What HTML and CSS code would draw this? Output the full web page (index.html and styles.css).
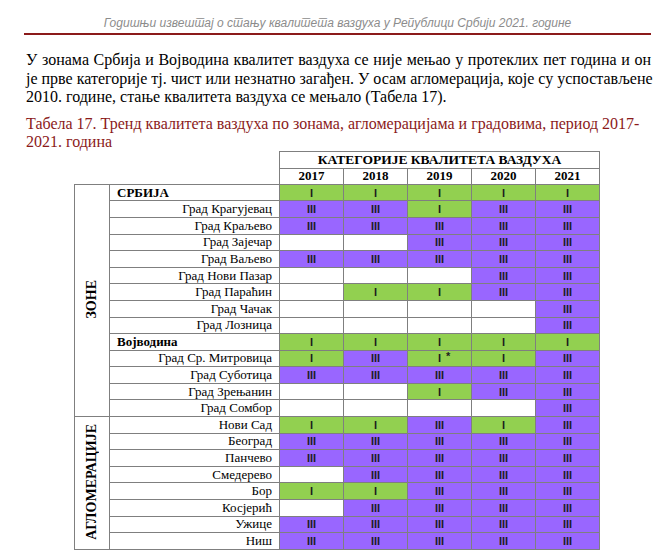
FILE: index.html
```html
<!DOCTYPE html>
<html lang="sr">
<head>
<meta charset="utf-8">
<title>Тренд квалитета ваздуха</title>
<link rel="stylesheet" href="styles.css">
</head>
<body>
<div class="page">
  <div class="running-head">Годишњи извештај о стању квалитета ваздуха у Републици Србији 2021. године</div>
  <p class="para">
    <span class="jline">У зонама Србија и Војводина квалитет ваздуха се није мењао у протеклих пет година и он</span>
    <span class="jline">је прве категорије тј. чист или незнатно загађен. У осам агломерација, које су успостављене</span>
    <span class="line">2010. године, стање квалитета ваздуха се мењало (Табела 17).</span>
  </p>
  <p class="caption">Табела 17. Тренд квалитета ваздуха по зонама, агломерацијама и градовима, период 2017-<br>2021. година</p>

  <table class="trend">
    <colgroup>
      <col class="c-zone"><col class="c-name"><col class="c-year"><col class="c-year"><col class="c-year"><col class="c-year"><col class="c-year">
    </colgroup>
    <thead>
      <tr class="h1"><th class="blank" colspan="2"></th><th class="cat" colspan="5">КАТЕГОРИЈЕ КВАЛИТЕТА ВАЗДУХА</th></tr>
      <tr class="h2"><th class="blank" colspan="2"></th><th class="yr">2017</th><th class="yr">2018</th><th class="yr">2019</th><th class="yr">2020</th><th class="yr">2021</th></tr>
    </thead>
    <tbody>
      <tr><td class="group" rowspan="14"><span class="vlabel">ЗОНЕ</span></td><td class="zname">СРБИЈА</td><td class="g">I</td><td class="g">I</td><td class="g">I</td><td class="g">I</td><td class="g">I</td></tr>
      <tr><td class="name">Град Крагујевац</td><td class="p">III</td><td class="p">III</td><td class="g">I</td><td class="p">III</td><td class="p">III</td></tr>
      <tr><td class="name">Град Краљево</td><td class="p">III</td><td class="p">III</td><td class="p">III</td><td class="p">III</td><td class="p">III</td></tr>
      <tr><td class="name">Град Зајечар</td><td></td><td></td><td class="p">III</td><td class="p">III</td><td class="p">III</td></tr>
      <tr><td class="name">Град Ваљево</td><td class="p">III</td><td class="p">III</td><td class="p">III</td><td class="p">III</td><td class="p">III</td></tr>
      <tr><td class="name">Град Нови Пазар</td><td></td><td></td><td></td><td class="p">III</td><td class="p">III</td></tr>
      <tr><td class="name">Град Параћин</td><td></td><td class="g">I</td><td class="g">I</td><td class="p">III</td><td class="p">III</td></tr>
      <tr><td class="name">Град Чачак</td><td></td><td></td><td></td><td></td><td class="p">III</td></tr>
      <tr><td class="name">Град Лозница</td><td></td><td></td><td></td><td></td><td class="p">III</td></tr>
      <tr><td class="zname">Војводина</td><td class="g">I</td><td class="g">I</td><td class="g">I</td><td class="g">I</td><td class="g">I</td></tr>
      <tr><td class="name">Град Ср. Митровица</td><td class="g">I</td><td class="p">III</td><td class="g"><span class="mark">I<span class="star">*</span></span></td><td class="g">I</td><td class="p">III</td></tr>
      <tr><td class="name">Град Суботица</td><td class="p">III</td><td class="p">III</td><td class="p">III</td><td class="p">III</td><td class="p">III</td></tr>
      <tr><td class="name">Град Зрењанин</td><td></td><td></td><td class="g">I</td><td class="p">III</td><td class="p">III</td></tr>
      <tr><td class="name">Град Сомбор</td><td></td><td></td><td></td><td></td><td class="p">III</td></tr>
      <tr><td class="group" rowspan="8"><span class="vlabel">АГЛОМЕРАЦИЈЕ</span></td><td class="name">Нови Сад</td><td class="g">I</td><td class="g">I</td><td class="p">III</td><td class="g">I</td><td class="p">III</td></tr>
      <tr><td class="name">Београд</td><td class="p">III</td><td class="p">III</td><td class="p">III</td><td class="p">III</td><td class="p">III</td></tr>
      <tr><td class="name">Панчево</td><td class="p">III</td><td class="p">III</td><td class="p">III</td><td class="p">III</td><td class="p">III</td></tr>
      <tr><td class="name">Смедерево</td><td></td><td class="p">III</td><td class="p">III</td><td class="p">III</td><td class="p">III</td></tr>
      <tr><td class="name">Бор</td><td class="g">I</td><td class="g">I</td><td class="p">III</td><td class="p">III</td><td class="p">III</td></tr>
      <tr><td class="name">Косјерић</td><td></td><td class="p">III</td><td class="p">III</td><td class="p">III</td><td class="p">III</td></tr>
      <tr><td class="name">Ужице</td><td class="p">III</td><td class="p">III</td><td class="p">III</td><td class="p">III</td><td class="p">III</td></tr>
      <tr><td class="name">Ниш</td><td class="p">III</td><td class="p">III</td><td class="p">III</td><td class="p">III</td><td class="p">III</td></tr>
    </tbody>
  </table>
</div>
</body>
</html>
```

FILE: styles.css
```css
html, body {
  margin: 0;
  padding: 0;
  background: #ffffff;
}

.page {
  width: 627px;
  padding: 16px 9px 0 24px;
  font-family: "Liberation Serif", "Times New Roman", serif;
  color: #000000;
}

.running-head {
  font-family: "Liberation Sans", Arial, sans-serif;
  font-style: italic;
  font-size: 12px;
  line-height: 14px;
  color: #8c8c8c;
  text-align: center;
  border-bottom: 2px solid #8b1a1a;
  box-sizing: border-box;
  height: 19px;
  padding-bottom: 3px;
}

.para {
  margin: 16px 0 0 2px;
  font-size: 16px;
  line-height: 18.5px;
}

.jline {
  display: block;
  text-align: justify;
  text-align-last: justify;
  white-space: nowrap;
}

.line {
  display: block;
}

.caption {
  margin: 8.75px 0 0 2px;
  font-size: 16px;
  line-height: 17.5px;
  color: #8b1a1a;
}

.trend {
  margin: 0.5px 0 0 50px;
  border-collapse: collapse;
  table-layout: fixed;
  width: 525px;
  font-family: "Liberation Serif", "Times New Roman", serif;
  font-size: 13px;
  line-height: 14px;
}

.c-zone { width: 35px; }
.c-name { width: 170px; }
.c-year { width: 64px; }

.trend th,
.trend td {
  border: 1px solid #7f7f7f;
  padding: 0;
  white-space: nowrap;
}

.trend th.blank {
  border: none;
}

.h1 { height: 17px; }
.h2 { height: 16px; }
.trend tbody tr { height: 16.6px; }

.cat {
  font-size: 13.5px;
  font-weight: bold;
  text-align: center;
}

.yr {
  font-size: 13px;
  font-weight: bold;
  text-align: center;
}

.name {
  text-align: right;
  padding-right: 7px !important;
}

.zname {
  text-align: left;
  font-weight: bold;
  padding-left: 7px !important;
}

.group {
  text-align: center;
  vertical-align: middle;
}

.vlabel {
  display: inline-block;
  writing-mode: vertical-rl;
  transform: rotate(180deg);
  font-weight: bold;
  font-size: 14px;
}

.g, .p {
  text-align: center;
  font-family: "Liberation Sans", Arial, sans-serif;
  font-size: 11px;
  font-weight: bold;
  color: #1e1e1e;
}

.g { background: #92d050; }
.p { background: #9966ff; }

.mark {
  position: relative;
}

.star {
  position: absolute;
  left: 8px;
  top: -3px;
  font-size: 11px;
}
```
